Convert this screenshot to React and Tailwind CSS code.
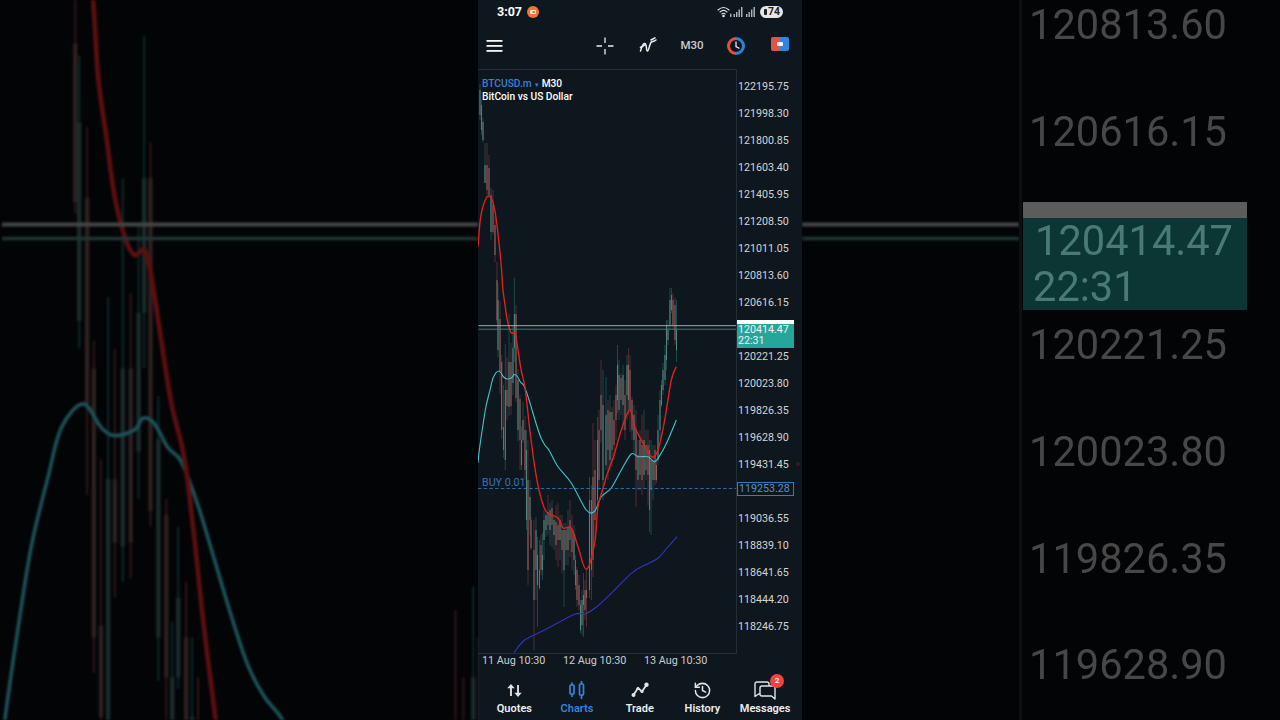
import { History } from "lucide-react"

const prices = [
  "122195.75", "121998.30", "121800.85", "121603.40", "121405.95", "121208.50", "121011.05",
  "120813.60", "120616.15", "", "120221.25", "120023.80", "119826.35", "119628.90", "119431.45",
  "", "119036.55", "118839.10", "118641.65", "118444.20", "118246.75",
]

const bgPrices = ["120813.60", "120616.15", "", "120221.25", "120023.80", "119826.35", "119628.90"]

// x, high, low, body top, body bottom, colour
const candles = [
  [480, 84, 120, 90, 115, "g"], [481.5, 100, 135, 105, 130, "r"], [483, 118, 142, 122, 140, "g"],
  [485, 143, 183, 165, 183, "g"], [487, 143, 195, 165, 190, "r"], [489, 155, 198, 168, 195, "r"],
  [491, 188, 240, 195, 232, "g"], [493, 190, 235, 205, 232, "r"], [495, 216, 262, 225, 255, "r"],
  [497, 262, 323, 280, 320, "r"], [498, 283, 357, 300, 350, "g"], [500, 301, 394, 319, 371, "r"],
  [501.7, 355, 439, 362, 430, "r"], [503.5, 385, 458, 427, 450, "r"], [505.3, 344, 470, 390, 460, "g"],
  [507, 357, 420, 390, 406, "r"], [509, 314, 416, 362, 407, "g"], [511, 343, 415, 362, 406, "r"],
  [513, 326, 395, 348, 383, "g"], [514.4, 278, 362, 314, 348, "g"], [516, 305, 402, 314, 398, "r"],
  [518, 369, 441, 380, 430, "g"], [520, 395, 470, 399, 440, "r"], [521.5, 426, 470, 440, 465, "g"],
  [523, 402, 443, 420, 440, "g"], [525, 416, 480, 430, 470, "r"], [526.5, 430, 530, 450, 520, "g"],
  [528, 440, 585, 480, 570, "r"], [530, 480, 535, 497, 520, "g"], [531, 517, 550, 520, 548, "r"],
  [534, 520, 650, 550, 600, "r"], [536, 517, 600, 530, 570, "g"], [537.5, 537, 627, 555, 585, "g"],
  [539.5, 540, 590, 570, 588, "r"], [541, 535, 575, 545, 570, "r"], [542.5, 533, 580, 555, 570, "g"],
  [544, 510, 560, 520, 540, "g"], [546, 513, 537, 515, 530, "g"], [548, 495, 535, 512, 525, "r"],
  [550, 503, 545, 510, 530, "g"], [552, 500, 547, 508, 525, "r"], [554, 515, 550, 520, 535, "g"],
  [556, 505, 560, 522, 545, "r"], [558, 503, 567, 525, 540, "r"], [560, 515, 560, 520, 540, "g"],
  [562, 515, 573, 530, 550, "r"], [564, 523, 607, 530, 570, "g"], [566, 523, 565, 530, 550, "r"],
  [568, 510, 565, 528, 550, "g"], [570, 500, 557, 520, 540, "r"], [572, 515, 570, 530, 552, "r"],
  [574, 525, 575, 535, 560, "g"], [575.5, 555, 590, 560, 585, "r"], [577, 567, 607, 570, 600, "r"],
  [579, 575, 610, 585, 605, "r"], [580.5, 600, 633, 605, 630, "g"], [582, 590, 635, 600, 625, "g"],
  [583.5, 573, 637, 595, 605, "g"], [585, 580, 620, 590, 610, "r"], [586.5, 570, 627, 590, 598, "r"],
  [589.5, 477, 598, 500, 590, "g"], [591.5, 485, 600, 500, 570, "r"], [593, 423, 577, 477, 560, "r"],
  [595, 440, 540, 470, 520, "r"], [597.5, 417, 510, 440, 500, "g"], [599, 410, 490, 430, 480, "r"],
  [601, 360, 443, 395, 430, "r"], [603, 370, 500, 405, 480, "g"], [606, 377, 470, 415, 465, "g"],
  [608, 400, 480, 410, 450, "r"], [610, 395, 470, 412, 460, "g"], [612, 407, 467, 412, 450, "r"],
  [614, 400, 460, 420, 445, "r"], [616, 385, 440, 395, 420, "r"], [617.5, 345, 413, 365, 400, "g"],
  [619, 360, 420, 375, 410, "g"], [621, 373, 415, 378, 400, "r"], [623, 365, 430, 375, 405, "g"],
  [625, 380, 440, 395, 430, "r"], [627, 355, 420, 365, 395, "g"], [628.5, 348, 415, 365, 400, "r"],
  [630, 355, 432, 370, 410, "r"], [632, 397, 440, 400, 430, "r"], [634, 405, 455, 415, 440, "g"],
  [636, 410, 507, 430, 470, "r"], [638, 440, 490, 455, 480, "g"], [640, 430, 490, 440, 475, "r"],
  [642, 415, 495, 445, 480, "r"], [644, 410, 488, 440, 475, "g"], [646, 430, 480, 445, 470, "r"],
  [648, 430, 505, 445, 475, "r"], [649.5, 440, 532, 450, 510, "r"], [651, 440, 535, 460, 490, "g"],
  [653, 445, 500, 460, 480, "g"], [655, 445, 485, 450, 480, "r"], [656.5, 460, 483, 465, 480, "r"],
  [658, 415, 465, 430, 460, "g"], [660, 390, 440, 400, 430, "g"], [661.5, 380, 407, 385, 405, "g"],
  [663, 363, 395, 370, 390, "g"], [665, 345, 385, 355, 380, "g"], [666.5, 320, 370, 325, 360, "g"],
  [668, 320, 345, 330, 340, "g"], [670, 288, 330, 300, 325, "g"], [671.5, 288, 313, 295, 310, "r"],
  [673, 293, 330, 300, 325, "r"], [675, 298, 345, 305, 340, "r"], [676.5, 300, 362, 330, 350, "g"],
]

const redLine = [
  [478, 247], [480.7, 217], [486.3, 198], [491.3, 198], [495.3, 213], [498.7, 240], [501.5, 269], [502.8, 288.7],
  [504.9, 303.8], [507, 318.9], [509.9, 329.9], [512, 333.4], [514.5, 332.2], [516.2, 338.6], [518.7, 354.8],
  [521.3, 371], [524.6, 385], [527.2, 405.9], [529.7, 429], [534.7, 466.7], [539.7, 493], [546.3, 511.7], [558, 518],
  [563, 528], [571.3, 528], [578, 546.7], [586.3, 569.3], [594.7, 543], [598, 506.7], [604.7, 483], [606.3, 476.7],
  [614.7, 453], [621.3, 430], [629.7, 410], [634.7, 426.7], [641.3, 440], [651.3, 456.7], [658, 450], [664.7, 420],
  [671.3, 380], [676.3, 366.7],
]
const tealLine = [
  [478, 463], [479.2, 451], [482.5, 428], [485.9, 407], [490.1, 389.6], [493.5, 377], [499, 371], [503.6, 377], [507, 379],
  [512, 377.5], [514.1, 374.6], [517, 376], [520.4, 382], [523.8, 385.6], [528, 396.6], [532.2, 410.5], [536.4, 424.5],
  [540.6, 437], [544.8, 445], [549.5, 451], [558, 466.7], [571.3, 483], [586.3, 510], [594.7, 511], [601.3, 496.7],
  [611.3, 488], [621.3, 470], [631.3, 454], [638, 456.7], [648, 456.7], [654.7, 461.7], [661.3, 453], [668, 440], [676.3, 420],
]
const blueLine = [
  [514, 652.7], [524.7, 640], [544.7, 630], [574.7, 614.3], [584.7, 614], [594.7, 608.3], [611.3, 593.3], [631.3, 573.3],
  [645, 565], [658, 558.3], [667, 548], [677, 536.7],
]

// catmull-rom through the points, the MA lines are smooth in the app
function smooth(pts) {
  let d = `M${pts[0][0]} ${pts[0][1]}`
  for (let i = 0; i < pts.length - 1; i++) {
    const p0 = pts[Math.max(i - 1, 0)]
    const p1 = pts[i]
    const p2 = pts[i + 1]
    const p3 = pts[Math.min(i + 2, pts.length - 1)]
    const c1x = p1[0] + (p2[0] - p0[0]) / 6
    const c1y = p1[1] + (p2[1] - p0[1]) / 6
    const c2x = p2[0] - (p3[0] - p1[0]) / 6
    const c2y = p2[1] - (p3[1] - p1[1]) / 6
    d += ` C${c1x} ${c1y} ${c2x} ${c2y} ${p2[0]} ${p2[1]}`
  }
  return d
}

function ChartLayers({ candleOpacity, maWidth = 1 }) {
  return (
    <>
      <g opacity={candleOpacity}>
        {candles.map(([x, hi, lo, top, bot, c], i) => (
          <g key={i}>
            <line x1={x} x2={x} y1={hi} y2={lo} stroke={c === "r" ? "#a8464a" : "#2f8a80"} strokeWidth="0.5" />
            <rect x={x - 0.55} y={top} width="1.1" height={bot - top} fill={c === "r" ? "#a06a66" : "#5f9088"} />
          </g>
        ))}
      </g>
      <path d={smooth(blueLine)} fill="none" stroke="#2f35c4" strokeWidth={1.1 * maWidth} />
      <path d={smooth(tealLine)} fill="none" stroke="#45c4cc" strokeWidth={1.1 * maWidth} />
      <path d={smooth(redLine)} fill="none" stroke="#e01f1f" strokeWidth={1.4 * maWidth} />
      <line x1="478.5" x2="736" y1="325.7" y2="325.7" stroke="#a5a9a8" strokeWidth="1" />
      <line x1="478.5" x2="736" y1="329.2" y2="329.2" stroke="#4f7f7c" strokeWidth="0.9" />
      <line x1="478" x2="736" y1="488.5" y2="488.5" stroke="#3a7cc4" strokeWidth="0.8" strokeDasharray="3.5 2.2" />
    </>
  )
}

function StatusBar() {
  return (
    <div className="h-[24px] flex items-center justify-between pl-[19px] pr-[19px]">
      <div className="flex items-center gap-[5px]">
        <span className="text-[12.5px] font-bold text-white">3:07</span>
        <svg width="12" height="12" viewBox="0 0 12 12">
          <circle cx="6" cy="6" r="6" fill="#ee7437" />
          <rect x="3" y="4" width="6" height="4" rx="1" fill="#fde6c8" />
          <rect x="5.5" y="5" width="2.4" height="2" fill="#ee7437" />
        </svg>
      </div>
      <div className="flex items-center">
        <svg width="15" height="12" viewBox="0 0 15 12" fill="none" stroke="#e4e6e8" strokeWidth="1.1" strokeLinecap="round">
          <path d="M1 4 Q6.5 -1 12 4" />
          <path d="M3 6 Q6.5 2.8 10 6" />
          <path d="M4.8 8 Q6.5 6.5 8.2 8" />
          <circle cx="6.5" cy="10" r="0.7" fill="#e4e6e8" />
          <path d="M13.8 8 v2.5" />
        </svg>
        <svg width="23" height="12" viewBox="0 0 23 12" fill="#b4b8bb" className="ml-[1px] mr-[4px]">
          <rect x="0.5" y="8" width="1.4" height="3" />
          <rect x="3" y="6" width="1.4" height="5" />
          <rect x="5.5" y="3.5" width="1.4" height="7.5" />
          <rect x="8" y="1" width="1.4" height="10" />
          <rect x="13" y="8" width="1.4" height="3" />
          <rect x="15.5" y="6" width="1.4" height="5" />
          <rect x="18" y="3.5" width="1.4" height="7.5" />
          <rect x="20.5" y="1" width="1.4" height="10" />
        </svg>
        <div className="h-[12px] w-[23px] rounded-full bg-[#e6e6e6] flex items-center justify-end pr-[3px] text-[10.5px] leading-none font-bold text-[#1a1f24]">
          <span className="mr-[1px] h-[6px] w-[3px] rounded-[1px] bg-[#1a1f24]"></span>
          74
        </div>
      </div>
    </div>
  )
}

function Toolbar() {
  return (
    <div className="h-[45px] pb-[1px] flex items-center justify-between">
      <svg width="17" height="12" viewBox="0 0 17 12" className="ml-[8px]" fill="#f6f6f6">
        <rect x="0.5" y="0" width="16" height="1.8" />
        <rect x="0.5" y="5" width="16" height="1.8" />
        <rect x="0.5" y="10" width="16" height="1.8" />
      </svg>
      <div className="flex">
        <div className="w-[44px] flex justify-center">
          <svg width="18" height="18" viewBox="0 0 18 18" stroke="#eceef0" strokeWidth="1.3" className="ml-[2px]">
            <path d="M0.5 9 H6 M12 9 H17.5 M9 0.5 V6 M9 12 V17.5" />
          </svg>
        </div>
        <div className="w-[44px] flex justify-center">
          <svg width="18" height="16" viewBox="0 0 18 16" fill="none" stroke="#eef0f2" strokeWidth="1.5" strokeLinecap="round">
            <path d="M1.5 14 C3 9 5 5 6.5 7 C8 9 7 14 8.5 14 C10 14 10.5 6 12.5 5 C14 4.3 15 4.5 17 3" />
            <path d="M1.5 10.5 L5.5 8 M12 3 L16 0.8" />
          </svg>
        </div>
        <div className="w-[44px] text-center text-[11.5px] font-medium text-[#c9cdd0]">M30</div>
        <div className="w-[44px] flex justify-center">
          <svg width="18" height="18" viewBox="0 0 18 18" fill="none">
            <path d="M9 1.5 A7.5 7.5 0 0 1 9 16.5" stroke="#2f80d8" strokeWidth="3" />
            <path d="M9 16.5 A7.5 7.5 0 0 1 9 1.5" stroke="#e0503f" strokeWidth="3" />
            <path d="M9 4.5 V9.5 L12.5 11.5" stroke="#e6eaee" strokeWidth="1.3" />
          </svg>
        </div>
        <div className="w-[44px] flex justify-center">
          <svg width="18" height="14" viewBox="0 0 18 14">
            <path d="M2 0 H9 V14 H2 a2 2 0 0 1 -2 -2 V2 a2 2 0 0 1 2 -2 Z" fill="#e05545" />
            <path d="M9 0 H16 a2 2 0 0 1 2 2 V12 a2 2 0 0 1 -2 2 H9 Z" fill="#2f86dd" />
            <rect x="6" y="5" width="6" height="4" rx="1" fill="#f4f4f4" />
          </svg>
        </div>
      </div>
    </div>
  )
}

function NavItem({ label, active, children }) {
  return (
    <div className="w-[62.7px] flex flex-col items-center">
      <div className="relative h-[22px] flex items-center justify-center">{children}</div>
      <span className={`mt-[1px] text-[11px] leading-[14px] font-semibold ${active ? "text-[#3b82dc]" : "text-[#eceef0]"}`}>
        {label}
      </span>
    </div>
  )
}

function BottomNav() {
  return (
    <div className="flex pl-[5px] pt-[11px]">
      <NavItem label="Quotes">
        <svg width="15" height="13" viewBox="0 0 16 14" fill="#e0e2e4">
          <path d="M4.2 0 L8.2 4.6 H5.2 V13 H3.2 V4.6 H0.2 Z" />
          <path d="M11.8 14 L7.8 9.4 H10.8 V1 H12.8 V9.4 H15.8 Z" />
        </svg>
      </NavItem>
      <NavItem label="Charts" active>
        <svg width="16" height="18" viewBox="0 0 16 18" fill="none" stroke="#3b82dc" strokeWidth="1.7">
          <rect x="1" y="4" width="4" height="9" rx="1" />
          <rect x="10.5" y="3" width="4" height="11" rx="1" />
          <path d="M3 1.5 V4 M3 13 V16 M12.5 0 V3 M12.5 14 V18" />
        </svg>
      </NavItem>
      <NavItem label="Trade">
        <svg width="18" height="16" viewBox="0 0 18 16" fill="#e2e4e6" stroke="#e2e4e6">
          <path d="M2.5 13 L7 6 L11 9.5 L15.5 3" fill="none" strokeWidth="1.8" />
          <circle cx="2.5" cy="13" r="2" stroke="none" />
          <circle cx="7" cy="6.5" r="1.6" stroke="none" />
          <circle cx="11" cy="9.5" r="1.6" stroke="none" />
          <circle cx="15.5" cy="2.8" r="2.2" stroke="none" />
        </svg>
      </NavItem>
      <NavItem label="History">
        <History size={19} color="#e2e4e6" strokeWidth={1.9} />
      </NavItem>
      <NavItem label="Messages">
        <svg width="22" height="19" viewBox="0 0 22 19" fill="none" stroke="#e2e4e6" strokeWidth="1.4" strokeLinejoin="round">
          <path d="M6 13 H4.5 L1 15.5 V3 a2 2 0 0 1 2 -2 H13 a2 2 0 0 1 2 2 V5" />
          <path d="M8 5 H19 a2 2 0 0 1 2 2 V18 L17.5 15 H8 a2 2 0 0 1 -2 -2 V7 a2 2 0 0 1 2 -2 Z" />
        </svg>
        <span className="absolute -top-[5px] left-[16px] h-[14px] w-[14px] rounded-full bg-[#ef4444] text-white text-[8px] font-medium flex items-center justify-center">
          2
        </span>
      </NavItem>
    </div>
  )
}

function Phone() {
  return (
    <div className="w-[324px] h-[720px] shrink-0 flex flex-col bg-[#0e171e]">
      <StatusBar />
      <Toolbar />
      <div className="flex h-[585px]">
        <div className="relative w-[259px] h-[585px] border-t border-r border-b border-[#262e35]">
          <svg viewBox="478 70 258 583" className="block w-[258px] h-[583px]">
            <ChartLayers candleOpacity={0.88} />
          </svg>
          <div className="absolute left-[4px] top-[8px] text-[10.2px] leading-[12px] font-medium text-white">
            <div>
              <span className="text-[#3f7fd6]">BTCUSD.m</span>
              <span className="text-[#3f7fd6] text-[7px] mx-[3px]">▾</span>
              M30
            </div>
            <div>BitCoin vs US Dollar</div>
          </div>
          <span className="absolute left-[4px] top-[406px] text-[10.7px] leading-[14px] text-[#3a6fb5]">BUY 0.01</span>
        </div>
        <div className="relative flex-1 pt-[4.5px] text-[10.7px] text-[#d2d5d7]">
          {prices.map((p, i) => (
            <div key={i} className="h-[27px] pl-[1px] flex items-center">{p}</div>
          ))}
          <div className="absolute left-0 top-[251px] w-[57px] h-[28px] bg-[#26a69a] border-t-[4px] border-white pl-[1px] text-[#e8f5f3] leading-[11px]">
            <div>120414.47</div>
            <div>22:31</div>
          </div>
          <div className="absolute left-0 top-[413px] w-[57px] h-[14px] border border-[#3b78c0] pl-[1px] leading-[12px] text-[#5b8fd0]">
            119253.28
          </div>
          <span className="absolute left-[59px] top-[393px] h-[4px] w-[4px] rounded-full bg-[#3a1a20]"></span>
        </div>
      </div>
      <div className="flex pl-[4px] text-[10.8px] leading-[14px] text-[#c9cdd0]">
        <span className="w-[81px]">11 Aug 10:30</span>
        <span className="w-[81px]">12 Aug 10:30</span>
        <span className="w-[81px]">13 Aug 10:30</span>
      </div>
      <BottomNav />
    </div>
  )
}

export default function App() {
  return (
    <div className="w-[1280px] h-[720px] flex overflow-hidden bg-[#020406] font-['Roboto',sans-serif]">
      <div className="w-[478px] h-[720px] shrink-0 overflow-hidden opacity-40 blur-[1px]">
        <svg viewBox="478 269 120.7 181.8" className="block w-[478px] h-[720px]">
          <ChartLayers candleOpacity={0.7} maWidth={0.85} />
        </svg>
      </div>
      <Phone />
      <div className="flex-1 h-[720px] flex overflow-hidden">
        <div className="w-[217px] shrink-0 opacity-40 blur-[1px]">
          <svg viewBox="680.2 269 54.8 181.8" className="block w-[217px] h-[720px]">
            <ChartLayers candleOpacity={0} />
          </svg>
        </div>
        <div className="relative flex-1 border-l-[3px] border-[#0b1014] -mt-[28px] text-[41.6px] text-[#474747]">
          {bgPrices.map((p, i) => (
            <div key={i} className="h-[106.7px] pl-[7px] flex items-center blur-[0.6px]">{p}</div>
          ))}
          <div className="absolute left-[1px] top-[230px] w-[224px] h-[108px] bg-[#0c3633] border-t-[16px] border-[#5c5c5c] pl-[12px] text-[#4a7a75] leading-[46px] blur-[0.6px]">
            <div>120414.47</div>
            <div className="-ml-[2px]">22:31</div>
          </div>
        </div>
      </div>
    </div>
  )
}
